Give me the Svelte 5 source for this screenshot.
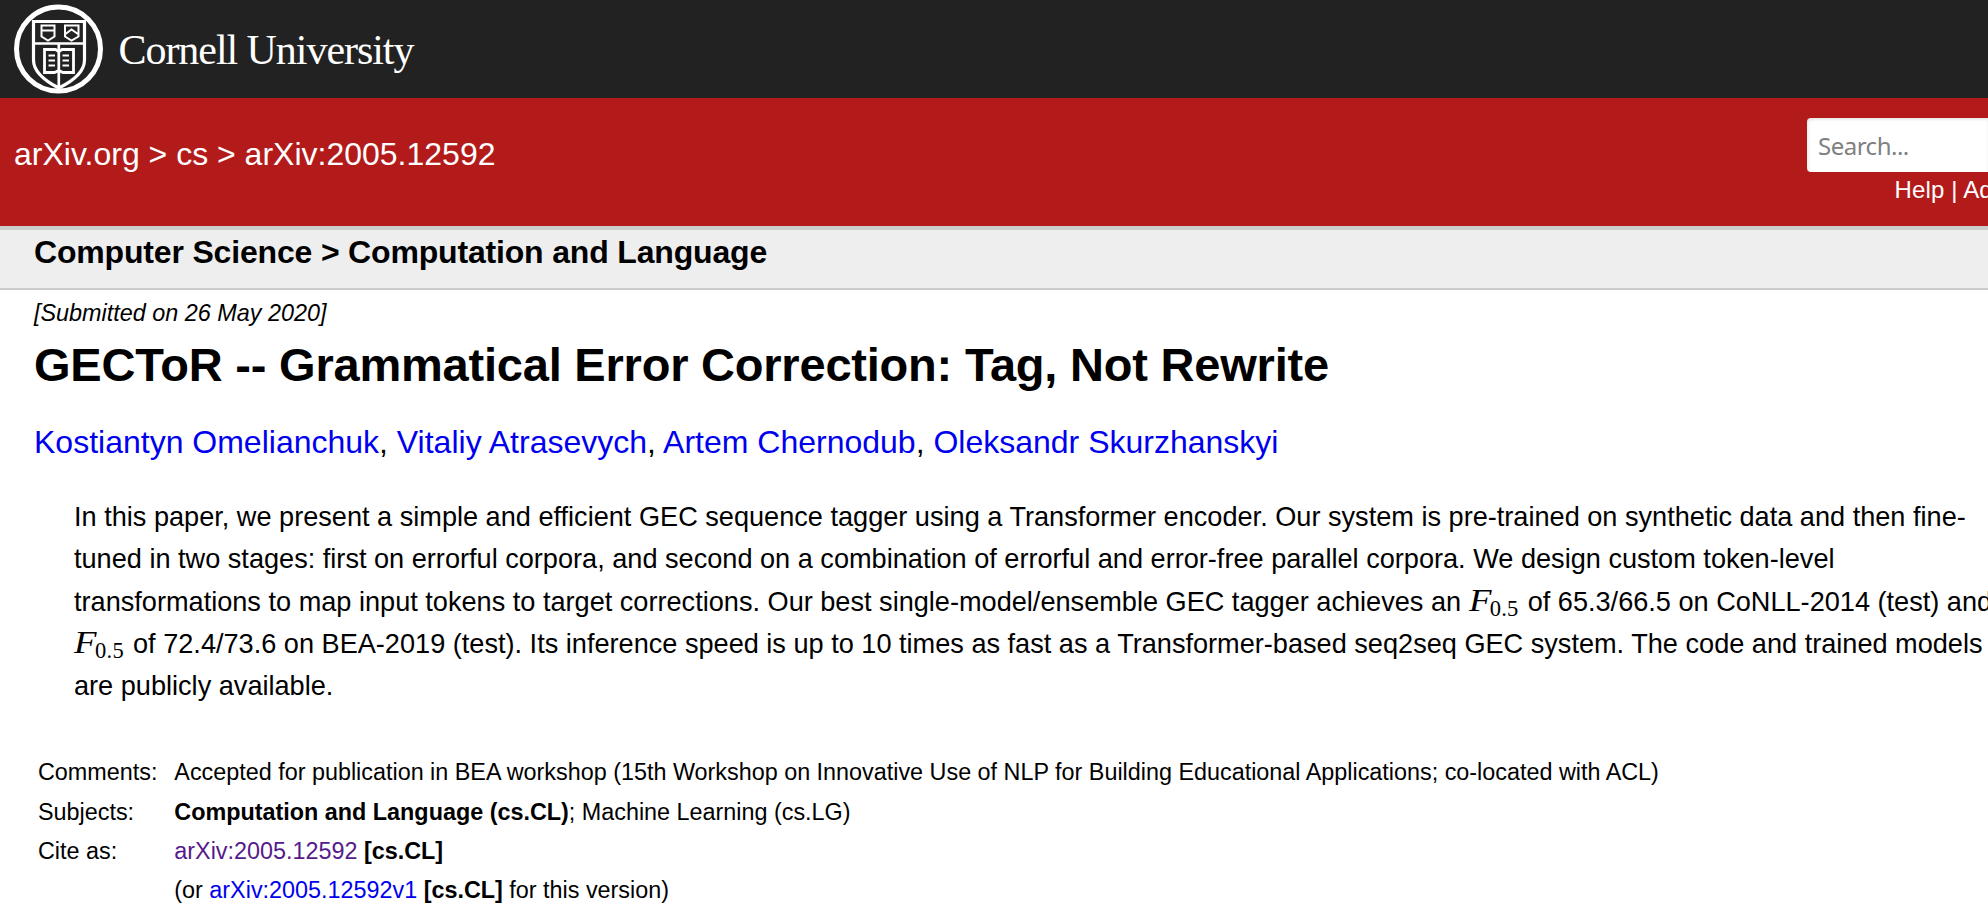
<script>
  const authors = ['Kostiantyn Omelianchuk', 'Vitaliy Atrasevych', 'Artem Chernodub', 'Oleksandr Skurzhanskyi'];
</script>

{#snippet score()}<span class="math"><i>F</i><span class="sub">0.5</span></span>{/snippet}

<div class="page">
  <header class="brand">
    <svg class="seal" viewBox="0 0 90 90" fill="none" stroke="#fff" aria-hidden="true">
      <circle cx="44.5" cy="45" r="42" stroke-width="5" />
      <path d="M19.5 17.5H70.500V56C70.500 69 57 78 44.800 84C33 78 19.500 69 19.500 56Z" stroke-width="3.200" />
      <path d="M19.500 39.500H71M44.800 40V83" stroke-width="2.700" />
      <path d="M27.500 21.500H40.500V32.500L34 36.500L27.500 32.500ZM27.500 26.500H40.500" stroke-width="2" />
      <path d="M51 21.500H64.500V32.500L57.500 36.500L51 32.500ZM51.500 30L57.500 25.500L64 30" stroke-width="2" />
      <path d="M44.800 47.500L41.500 45.500H30.500V68.500H40.500L44.800 66.500L49 68.500H59.500V45.500H48Z" stroke-width="2.800" />
      <path d="M34.500 51.500H41M34.500 56.500H41M34.500 61.500H41M48.500 51.500H55M48.500 56.500H55M48.500 61.500H55" stroke-width="2" />
    </svg>
    <span class="wordmark">Cornell University</span>
  </header>

  <nav class="banner">
    <div class="crumbs">arXiv.org &gt; cs &gt; arXiv:2005.12592</div>
    <div class="search">
      <div class="field">Search...</div>
      <div class="help">Help | Ad</div>
    </div>
  </nav>

  <div class="subject">Computer Science &gt; Computation and Language</div>

  <main>
    <div class="date">[Submitted on 26 May 2020]</div>
    <h1>GECToR -- Grammatical Error Correction: Tag, Not Rewrite</h1>
    <div class="authors">{#each authors as name, i}{i ? ', ' : ''}<a href="#top">{name}</a>{/each}</div>
    <div class="abstract">
      <div>In this paper, we present a simple and efficient GEC sequence tagger using a Transformer encoder. Our system is pre-trained on synthetic data and then fine-</div>
      <div>tuned in two stages: first on errorful corpora, and second on a combination of errorful and error-free parallel corpora. We design custom token-level</div>
      <div>transformations to map input tokens to target corrections. Our best single-model/ensemble GEC tagger achieves an {@render score()} of 65.3/66.5 on CoNLL-2014 (test) and</div>
      <div>{@render score()} of 72.4/73.6 on BEA-2019 (test). Its inference speed is up to 10 times as fast as a Transformer-based seq2seq GEC system. The code and trained models</div>
      <div>are publicly available.</div>
    </div>
    <div class="meta">
      <span>Comments:</span><span>Accepted for publication in BEA workshop (15th Workshop on Innovative Use of NLP for Building Educational Applications; co-located with ACL)</span>
      <span>Subjects:</span><span><b>Computation and Language (cs.CL)</b>; Machine Learning (cs.LG)</span>
      <span>Cite as:</span><span><a class="visited" href="#top">arXiv:2005.12592</a> <b>[cs.CL]</b></span>
      <span></span><span>(or <a href="#top">arXiv:2005.12592v1</a> <b>[cs.CL]</b> for this version)</span>
    </div>
  </main>
</div>

<style>
  :global(body) { margin: 0; background: #fff; overflow: hidden; }
  .page { width: 1988px; height: 918px; overflow: hidden; font-family: "Liberation Sans", Arial, sans-serif; color: #000; white-space: nowrap; }
  a { color: #00e; text-decoration: none; }
  a.visited { color: #551a8b; }
  .brand { height: 98px; background: #222; display: flex; align-items: center; padding-left: 14px; box-sizing: border-box; }
  .seal { width: 90px; height: 90px; flex: none; }
  .wordmark { margin-left: 14.5px; padding-top: 2px; color: #fff; font: 42px/50px "Palatino Linotype", "Liberation Serif", serif; letter-spacing: -1.05px; }
  .banner { height: 128px; background: #b31b1b; color: #fff; border-bottom: 4px solid #ccc; display: flex; justify-content: space-between; overflow: hidden; }
  .crumbs { padding: 36px 0 0 14px; font-size: 32px; line-height: 40px; }
  .search { width: 181px; padding-top: 20px; }
  .field { height: 54px; box-sizing: border-box; padding-left: 11px; border-radius: 4px 0 0 4px; background: #fff; color: #808080; box-shadow: inset 4px 2px 4px -2px rgba(10, 10, 10, .05), inset 0 2px 3px rgba(10, 10, 10, .07); clip-path: inset(0); font: 24px/55px "Noto Sans", sans-serif; letter-spacing: -.5px; }
  .help { padding: 3px 0 0 87.5px; font-size: 24px; line-height: 30px; letter-spacing: .15px; }
  .subject { height: 58px; box-sizing: border-box; padding: 2px 0 0 34px; background: #eee; font-size: 32px; font-weight: 700; line-height: 40px; letter-spacing: -.175px; }
  main { border-top: 2px solid #ccc; padding: 8px 0 0 34px; }
  .date { font-size: 23.4px; line-height: 30px; font-style: italic; }
  h1 { margin: 9px 0 0; font-size: 47px; line-height: 56px; letter-spacing: -.21px; }
  .authors { margin-top: 29px; font-size: 32px; line-height: 40px; }
  .abstract { margin: 34px 0 0 40px; font-size: 27.13px; line-height: 42.3px; }
  .abstract > div { height: 42.3px; }
  .math { display: inline-block; width: 51.5px; height: 42px; vertical-align: top; position: relative; top: -2px; font-family: "Liberation Serif", serif; }
  .math i { display: inline-block; font-size: 32px; width: 21px; transform: scaleX(1.15); transform-origin: left; }
  .sub { font-size: 22.5px; letter-spacing: .3px; position: relative; top: 5px; }
  .meta { margin: 46px 0 0 4px; display: grid; grid-template-columns: 136.3px auto; font-size: 23.37px; line-height: 39.3px; grid-auto-rows: 39.3px; }
</style>
